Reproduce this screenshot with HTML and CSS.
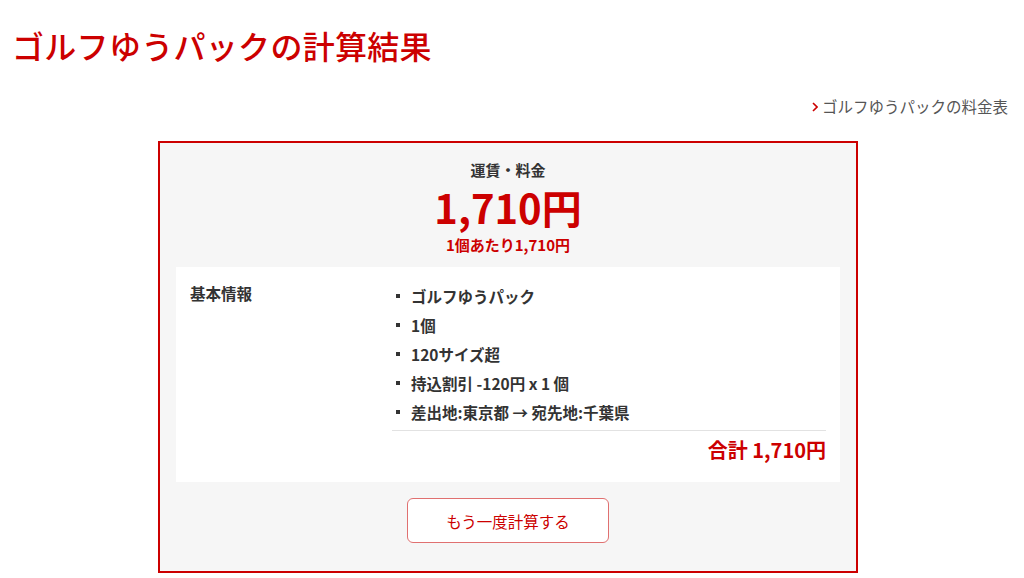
FILE: index.html
```html
<!DOCTYPE html>
<html>

<head>
  <title>ゴルフゆうパックの計算結果</title>
  <link rel="stylesheet" href="styles.css">
</head>

<body>
  <h1 class="page-title">ゴルフゆうパックの計算結果</h1>

  <div class="rate-link">
    <a href="#">
      <svg class="chevron" width="6" height="10" viewBox="0 0 6 10"><path d="M1 1 L5 5 L1 9" fill="none" stroke="#c00" stroke-width="1.6"/></svg>
      ゴルフゆうパックの料金表
    </a>
  </div>

  <div class="result-box">
    <div class="fare-label">運賃・料金</div>
    <div class="fare-price">1,710円</div>
    <div class="fare-unit">1個あたり1,710円</div>

    <div class="info-panel">
      <div class="info-label">基本情報</div>
      <div class="info-body">
        <ul class="info-list">
          <li>ゴルフゆうパック</li>
          <li>1個</li>
          <li>120サイズ超</li>
          <li>持込割引 -120円 x 1 個</li>
          <li>差出地:東京都 → 宛先地:千葉県</li>
        </ul>
        <div class="info-total">合計 1,710円</div>
      </div>
    </div>

    <div class="actions">
      <button class="again-btn">もう一度計算する</button>
    </div>
  </div>
</body>

</html>
```

FILE: styles.css
```css
body {
  margin: 0;
  font-family: "Noto Sans CJK JP", "Noto Sans", sans-serif;
  color: #333;
  background: #fff;
}

.page-title {
  margin: 23px 0 0 12px;
  font-size: 32px;
  line-height: 44px;
  font-weight: 500;
  color: #cc0000;
  letter-spacing: 0.3px;
}

.rate-link {
  margin-top: 28px;
  padding-right: 16px;
  text-align: right;
  font-size: 15.5px;
  line-height: 22px;
}

.rate-link a {
  color: #555;
  text-decoration: none;
}

.chevron {
  vertical-align: 1px;
  margin-right: 1px;
}

.result-box {
  width: 664px;
  margin: 24px 0 0 158px;
  padding: 16px 16px 28px;
  border: 2px solid #cc0000;
  background: #f6f6f6;
  text-align: center;
}

.fare-label {
  font-size: 15px;
  line-height: 22px;
  font-weight: 700;
  color: #333;
}

.fare-price {
  margin-top: 4px;
  font-size: 40px;
  line-height: 44px;
  font-weight: 700;
  color: #cc0000;
}

.fare-unit {
  margin-top: 6px;
  font-size: 15px;
  line-height: 20px;
  font-weight: 700;
  color: #cc0000;
}

.info-panel {
  display: grid;
  grid-template-columns: 202px 1fr;
  margin-top: 12px;
  padding: 16px 14px 19px;
  background: #fff;
  text-align: left;
}

.info-label {
  font-size: 15.5px;
  line-height: 20px;
  font-weight: 700;
}

.info-list {
  list-style: none;
  margin: 3px 0 0;
  padding: 0 0 8px;
  border-bottom: 1px solid #e2e2e2;
}

.info-list li {
  position: relative;
  padding-left: 19px;
  font-size: 15.5px;
  line-height: 20px;
  font-weight: 700;
}

.info-list li + li {
  margin-top: 9px;
}

.info-list li::before {
  content: "";
  position: absolute;
  left: 4px;
  top: 8px;
  width: 4px;
  height: 4px;
  background: #333;
}

.info-total {
  margin-top: 6px;
  text-align: right;
  font-size: 20px;
  line-height: 26px;
  font-weight: 700;
  color: #cc0000;
}

.actions {
  margin-top: 16px;
}

.again-btn {
  width: 202px;
  height: 45px;
  border: 1px solid #e07070;
  border-radius: 6px;
  background: #fff;
  color: #cc0000;
  font-family: inherit;
  font-size: 15.5px;
  cursor: pointer;
}
```
